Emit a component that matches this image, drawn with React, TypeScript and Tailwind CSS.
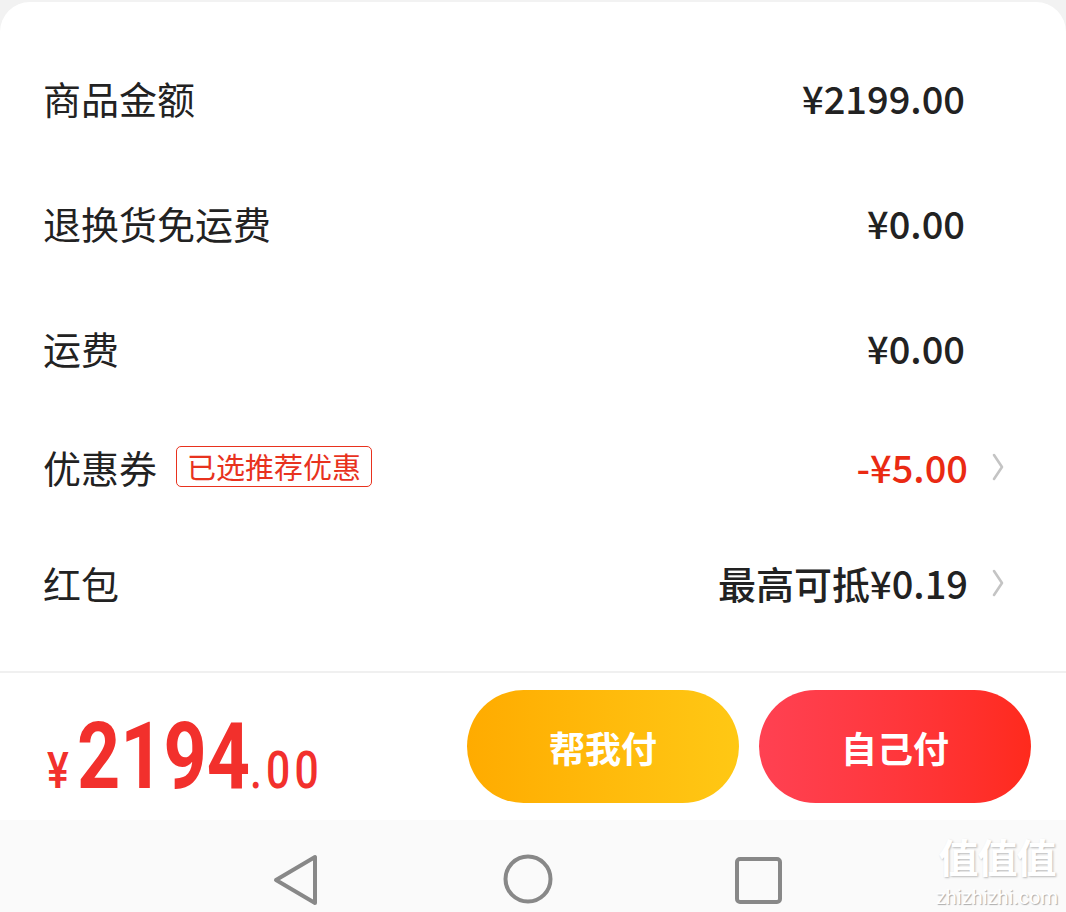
import React from "react"

const cjk = '"Noto Sans CJK SC", "Noto Sans", sans-serif'

function Chevron() {
  return (
    <svg width="16" height="30" viewBox="0 0 16 30" fill="none">
      <path d="M4 3 L12 15 L4 27" stroke="#c4c4c4" strokeWidth="2.6" strokeLinecap="round" strokeLinejoin="round" />
    </svg>
  )
}

function Row({
  label,
  value,
  h,
  tag,
  arrow,
  red,
}: {
  label: string
  value: string
  h: string
  tag?: string
  arrow?: boolean
  red?: boolean
}) {
  return (
    <div className={`flex items-center justify-between pl-[43px] pr-[60px] ${h}`}>
      <div className="flex items-center">
        <span className="text-[38px] leading-none text-[#222]">{label}</span>
        {tag && (
          <span className="ml-[19px] rounded-[5px] border border-[#e8321e] px-[10px] py-[5px] text-[29px] leading-[29px] text-[#e8321e]">
            {tag}
          </span>
        )}
      </div>
      <div className="flex items-center">
        <span
          className={`text-[38px] leading-none font-medium ${red ? "text-[#ea2a13]" : "text-[#222]"}`}
        >
          {value}
        </span>
        <div className={`flex w-[16px] justify-center ${arrow ? "ml-[22px]" : "ml-[25px]"}`}>
          {arrow && <Chevron />}
        </div>
      </div>
    </div>
  )
}

export default function App() {
  return (
    <div className="relative flex h-[912px] w-[1066px] flex-col bg-[#f2f2f2]" style={{ fontFamily: cjk }}>
      <div className="mt-[2px] flex flex-1 flex-col rounded-t-[30px] bg-white">
        <div className="pt-[33px] pb-[27px]">
          <Row label="商品金额" value="¥2199.00" h="h-[125px]" />
          <Row label="退换货免运费" value="¥0.00" h="h-[125px]" />
          <Row label="运费" value="¥0.00" h="h-[125px]" />
          <Row label="优惠券" tag="已选推荐优惠" value="-¥5.00" h="mt-[2px] h-[109px]" arrow red />
          <Row label="红包" value="最高可抵¥0.19" h="h-[123px]" arrow />
        </div>
        <div className="h-[2px] bg-[#f0f0f0]" />
        <div className="flex flex-1 items-center justify-between pl-[47px] pr-[35px]">
          <div className="w-[300px] pt-[21px]">
            <div
              className="flex origin-left scale-x-[0.82] items-baseline text-[#f2302c]"
              style={{ fontFamily: '"Roboto", sans-serif' }}
            >
              <span className="mr-[10px] text-[50px] leading-none font-medium">¥</span>
              <span className="text-[92px] leading-none font-bold">2194</span>
              <span className="text-[52px] leading-none font-medium tracking-[5px]">.00</span>
            </div>
          </div>
          <div className="flex gap-[20px]">
            <button className="h-[113px] w-[272px] rounded-full bg-gradient-to-r from-[#ffab00] to-[#ffc814] text-[36px] font-bold text-white">
              帮我付
            </button>
            <button className="h-[113px] w-[272px] rounded-full bg-gradient-to-r from-[#ff4152] to-[#ff2a1c] text-[36px] font-bold text-white">
              自己付
            </button>
          </div>
        </div>
      </div>
      <div className="flex h-[92px] items-start gap-[182px] bg-[#fafafa] pt-[34px] pl-[273px]">
        <svg width="48" height="52" viewBox="0 0 48 52" fill="none">
          <path d="M42 3 L42 49 L3 26 Z" stroke="#888" strokeWidth="4" strokeLinejoin="round" />
        </svg>
        <svg width="50" height="50" viewBox="0 0 50 50" fill="none">
          <circle cx="25" cy="25" r="22.5" stroke="#888" strokeWidth="4" />
        </svg>
        <svg width="48" height="48" viewBox="0 0 48 48" fill="none" className="mt-[3px]">
          <rect x="2" y="2" width="43" height="43" rx="3" stroke="#888" strokeWidth="4" />
        </svg>
      </div>
      <div className="absolute right-[8px] bottom-[5px] flex flex-col items-center text-white">
        <span className="text-[40px] leading-none font-bold tracking-[-1px] [text-shadow:1px_1px_2px_#bbb]">
          值值值
        </span>
        <span
          className="mt-[11px] text-[20px] leading-none [text-shadow:1px_1px_1px_#aaa]"
          style={{ fontFamily: '"Roboto", sans-serif' }}
        >
          zhizhizhi.com
        </span>
      </div>
    </div>
  )
}
